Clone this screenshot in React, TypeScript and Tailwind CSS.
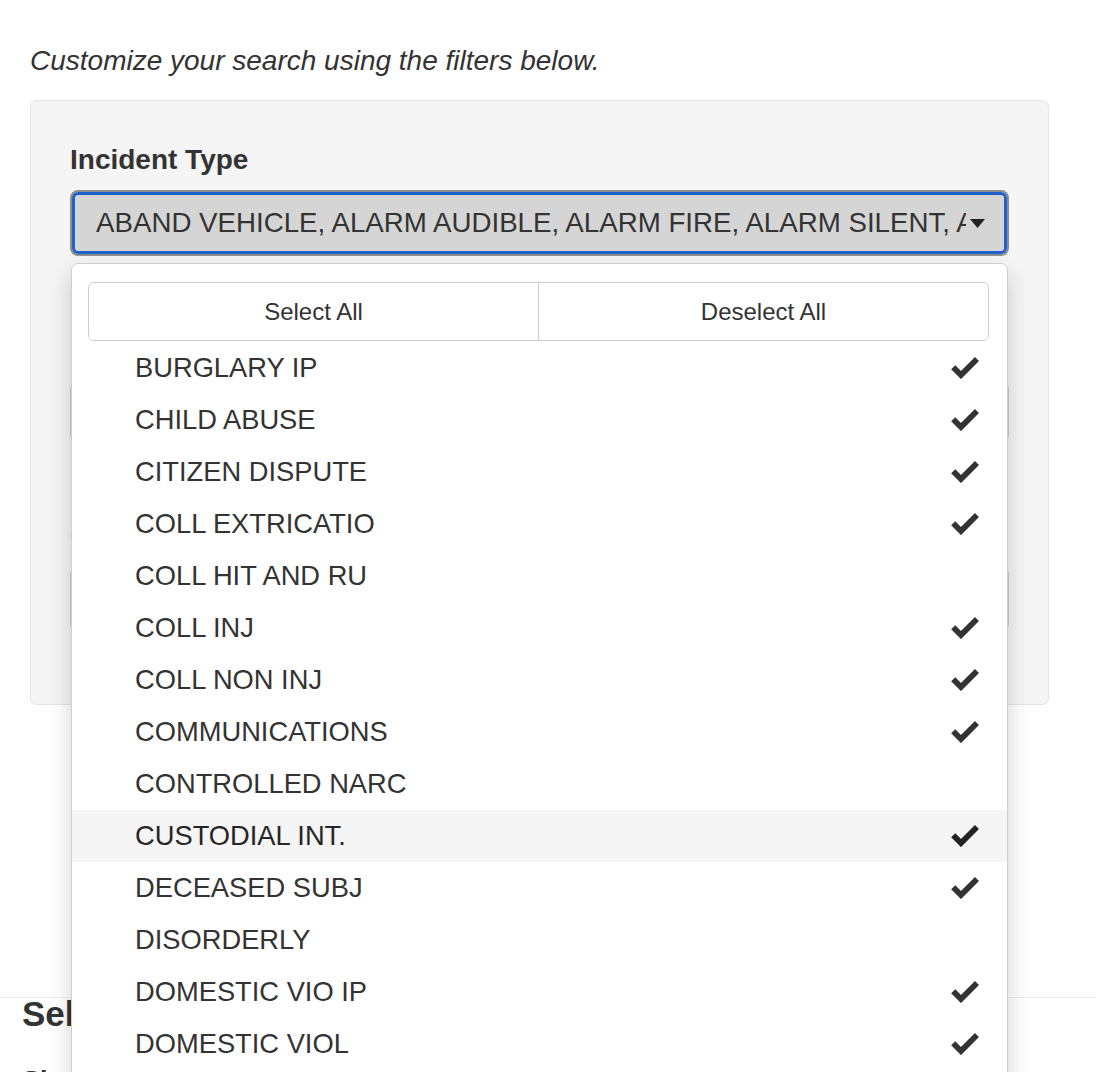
import React from "react";

const items: { label: string; checked: boolean; active?: boolean }[] = [
  { label: "BURGLARY IP", checked: true },
  { label: "CHILD ABUSE", checked: true },
  { label: "CITIZEN DISPUTE", checked: true },
  { label: "COLL EXTRICATIO", checked: true },
  { label: "COLL HIT AND RU", checked: false },
  { label: "COLL INJ", checked: true },
  { label: "COLL NON INJ", checked: true },
  { label: "COMMUNICATIONS", checked: true },
  { label: "CONTROLLED NARC", checked: false },
  { label: "CUSTODIAL INT.", checked: true, active: true },
  { label: "DECEASED SUBJ", checked: true },
  { label: "DISORDERLY", checked: false },
  { label: "DOMESTIC VIO IP", checked: true },
  { label: "DOMESTIC VIOL", checked: true },
  { label: "DRUNK", checked: true },
];

function Check({ dark }: { dark?: boolean }) {
  return (
    <svg width="28" height="25" viewBox="0 0 28 25" className="mb-[3px] block">
      <path
        d="M2.2 13.2 L10 21 L26 5"
        fill="none"
        stroke={dark ? "#222" : "#333"}
        strokeWidth="5.8"
        strokeLinecap="butt"
        strokeLinejoin="miter"
      />
    </svg>
  );
}

export default function App() {
  return (
    <div className="relative h-[1072px] w-[1096px] overflow-hidden bg-white font-['Liberation_Sans',Arial,sans-serif] text-[#333]">
      <div className="pl-[30px] pr-[47px]">
        <p className="pt-[43px] text-[28px] italic leading-[36px]">
          Customize your search using the filters below.
        </p>

        <div className="mt-[21px] rounded-[7px] border border-[#e3e3e3] bg-[#f5f5f5] px-[39px] pb-[74px] pt-[43px]">
          <div className="text-[28px] font-bold leading-[32px]">Incident Type</div>

          <div className="relative mt-[14px]">
            <div className="h-[66px] rounded-[8px] border-2 border-[#8e8e8e] p-0">
              <div className="flex h-full items-center rounded-[6px] border-[3px] border-[#1f62cc] bg-[#d5d5d5] pl-[21px] pr-[19px]">
                <span className="flex-1 overflow-hidden whitespace-nowrap text-[27.7px] leading-[32px]">
                  ABAND VEHICLE, ALARM AUDIBLE, ALARM FIRE, ALARM SILENT, ALARM ROBBERY, ANIMAL
                </span>
                <svg width="15" height="9" viewBox="0 0 15 9" className="ml-[4px] shrink-0">
                  <path d="M0 0 L15 0 L7.5 9 Z" fill="#222" />
                </svg>
              </div>
            </div>

            <div className="absolute left-[1px] top-[73px] z-10 w-[937px] rounded-[7px] border border-[#cfcfcf] bg-white pt-[18px] shadow-[0_10px_24px_rgba(0,0,0,0.18)]">
              <div className="mx-[16px] mr-[18px] flex h-[59px] overflow-hidden rounded-[6px] border border-[#cccccc]">
                <button className="flex-1 border-r border-[#cccccc] bg-white text-[24px] text-[#333]">
                  Select All
                </button>
                <button className="flex-1 bg-white text-[24px] text-[#333]">Deselect All</button>
              </div>
              <ul className="pt-px">
                {items.map((it) => (
                  <li
                    key={it.label}
                    className={
                      "flex h-[52px] items-center pl-[63px] pr-[28px] text-[27.3px] " +
                      (it.active ? "bg-[#f5f5f5] text-[#262626]" : "bg-white")
                    }
                  >
                    <span className="flex-1">{it.label}</span>
                    {it.checked && <Check dark={it.active} />}
                  </li>
                ))}
              </ul>
            </div>
          </div>

          <div className="mt-[75px] text-[27px] font-bold leading-[32px]">Date Range</div>
          <div className="mt-[19px] h-[60px] rounded-[6px] border border-[#ccc] bg-white" />

          <div className="mt-[78px] text-[27px] font-bold leading-[32px]">City</div>
          <div className="mt-[16px] h-[62px] rounded-[6px] border border-[#ccc] bg-white" />
        </div>
      </div>

      <div className="mt-[292px] border-t border-[#eeeeee] pl-[22px]">
        <h2 className="mt-[1px] text-[35px] font-bold leading-[30px]">Select Output Options</h2>
        <div className="mt-[36px] text-[27px] font-bold leading-[32px]">Show Results</div>
      </div>
    </div>
  );
}
